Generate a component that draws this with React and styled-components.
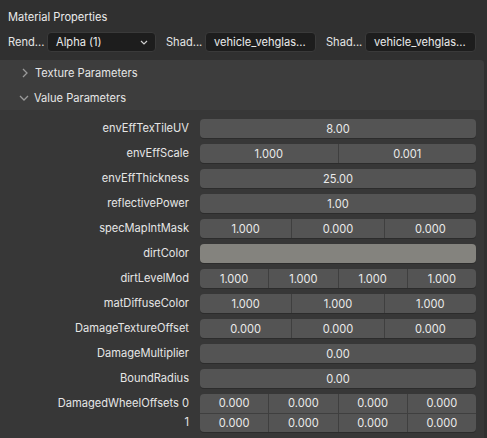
import React from "react";
import styled, { createGlobalStyle } from "styled-components";

const Global = createGlobalStyle`
  html, body { margin: 0; padding: 0; background: #303030; }
  body { font-family: Inter, "Noto Sans", sans-serif; font-size: 11.1px; color: #e6e6e6; }
  * { box-sizing: border-box; }
`;

const Page = styled.div`
  width: 487px;
  height: 438px;
  overflow: hidden;
  background: #303030;
  display: flex;
  flex-direction: column;
`;

const Title = styled.div`
  height: 32px;
  padding: 10px 0 0 8px;
  color: #ebebeb;
`;

const TopRow = styled.div`
  display: flex;
  align-items: center;
  height: 20px;
  padding-left: 8px;
  margin-bottom: 8px;
`;

const TopLabel = styled.span`
  width: 39px;
  color: #e6e6e6;
  margin-left: ${(p) => p.$ml || 0}px;
  white-space: nowrap;
`;

const Input = styled.div`
  width: ${(p) => p.$w}px;
  height: 20px;
  background: #1d1d1d;
  border: 1px solid #3a3a3a;
  border-radius: 4px;
  display: flex;
  align-items: center;
  justify-content: space-between;
  padding: 0 7px 0 8px;
  color: #ebebeb;
  white-space: nowrap;
`;

const Panel = styled.div`
  flex: 1;
  margin-right: 3px;
  border-top-right-radius: 4px;
  overflow: hidden;
  background: #373737;
  display: flex;
  flex-direction: column;
`;

const SubHeader = styled.div`
  height: 25px;
  background: #3d3d3d;
  display: flex;
  align-items: center;
  padding-left: ${(p) => p.$pl}px;
  color: #e6e6e6;
  gap: ${(p) => p.$gap}px;
`;

const Content = styled.div`
  padding: 9px 0 0 0;
  display: flex;
  flex-direction: column;
  gap: 6px;
`;

const Row = styled.div`
  display: grid;
  grid-template-columns: 189px 276px;
  column-gap: 11px;
  align-items: center;
`;

const Label = styled.div`
  text-align: right;
  color: #e6e6e6;
  white-space: nowrap;
  line-height: 19px;
`;

const LabelStack = styled.div`
  display: flex;
  flex-direction: column;
`;

const Field = styled.div`
  height: ${(p) => (p.$h ? p.$h : 19)}px;
  background: ${(p) => p.$color || "#545454"};
  border-radius: 4px;
  box-shadow: 0 1px 0 #2c2c2c;
  display: flex;
  flex-direction: column;
  overflow: hidden;
`;

const FieldRow = styled.div`
  flex: 1;
  display: flex;
  & + & { border-top: 1px solid #3f3f3f; }
`;

const Cell = styled.div`
  flex: 1;
  display: flex;
  align-items: center;
  justify-content: center;
  color: #ebebeb;
  & + & { border-left: 1px solid #3f3f3f; }
`;

const Chevron = ({ dir }) =>
  dir === "right" ? (
    <svg width="6" height="10" viewBox="0 0 6 10">
      <polyline points="1,1 5,5 1,9" fill="none" stroke="#9a9a9a" strokeWidth="1.3" />
    </svg>
  ) : (
    <svg width="10" height="6" viewBox="0 0 10 6">
      <polyline points="1,1 5,5 9,1" fill="none" stroke="#9a9a9a" strokeWidth="1.3" />
    </svg>
  );

const SmallDown = () => (
  <svg width="8" height="5" viewBox="0 0 8 5">
    <polyline points="1,1 4,4 7,1" fill="none" stroke="#cfcfcf" strokeWidth="1.2" />
  </svg>
);

const rows = [
  ["envEffTexTileUV", ["8.00"]],
  ["envEffScale", ["1.000", "0.001"]],
  ["envEffThickness", ["25.00"]],
  ["reflectivePower", ["1.00"]],
  ["specMapIntMask", ["1.000", "0.000", "0.000"]],
  ["dirtColor", null],
  ["dirtLevelMod", ["1.000", "1.000", "1.000", "1.000"]],
  ["matDiffuseColor", ["1.000", "1.000", "1.000"]],
  ["DamageTextureOffset", ["0.000", "0.000", "0.000"]],
  ["DamageMultiplier", ["0.00"]],
  ["BoundRadius", ["0.00"]],
];

const zeros = ["0.000", "0.000", "0.000", "0.000"];

export default function App() {
  return (
    <Page>
      <Global />
      <Title>Material Properties</Title>
      <TopRow>
        <TopLabel>Rend...</TopLabel>
        <Input $w={109}>
          <span>Alpha (1)</span>
          <SmallDown />
        </Input>
        <TopLabel $ml={10}>Shad...</TopLabel>
        <Input $w={111}>vehicle_vehglas...</Input>
        <TopLabel $ml={10}>Shad...</TopLabel>
        <Input $w={111}>vehicle_vehglas...</Input>
      </TopRow>
      <Panel>
        <SubHeader $pl={22} $gap={7}>
          <Chevron dir="right" />
          <span>Texture Parameters</span>
        </SubHeader>
        <SubHeader $pl={19} $gap={5}>
          <Chevron dir="down" />
          <span>Value Parameters</span>
        </SubHeader>
        <Content>
          {rows.map(([label, vals]) => (
            <Row key={label}>
              <Label>{label}</Label>
              {vals ? (
                <Field>
                  <FieldRow>
                    {vals.map((v, i) => (
                      <Cell key={i}>{v}</Cell>
                    ))}
                  </FieldRow>
                </Field>
              ) : (
                <Field $color="#84837e" />
              )}
            </Row>
          ))}
          <Row>
            <LabelStack>
              <Label>DamagedWheelOffsets 0</Label>
              <Label>1</Label>
            </LabelStack>
            <Field $h={38}>
              <FieldRow>
                {zeros.map((v, i) => (
                  <Cell key={i}>{v}</Cell>
                ))}
              </FieldRow>
              <FieldRow>
                {zeros.map((v, i) => (
                  <Cell key={i}>{v}</Cell>
                ))}
              </FieldRow>
            </Field>
          </Row>
        </Content>
      </Panel>
    </Page>
  );
}
